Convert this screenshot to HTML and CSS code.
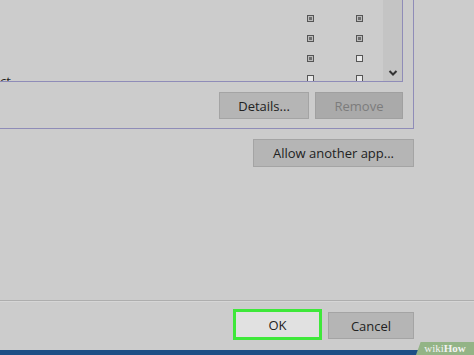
FILE: index.html
```html
<!DOCTYPE html>
<html lang="en">
<head>
    <meta charset="UTF-8">
    <title>Allowed apps</title>
    <link rel="stylesheet" href="styles.css">
</head>
<body>
    <div class="dialog">
        <div class="group">
            <div class="list">
                <div class="rows">
                    <div class="row">
                        <span class="name"></span>
                        <span class="cell"><i class="box on"></i></span>
                        <span class="cell"><i class="box on"></i></span>
                    </div>
                    <div class="row">
                        <span class="name"></span>
                        <span class="cell"><i class="box on"></i></span>
                        <span class="cell"><i class="box on"></i></span>
                    </div>
                    <div class="row">
                        <span class="name"></span>
                        <span class="cell"><i class="box on"></i></span>
                        <span class="cell"><i class="box"></i></span>
                    </div>
                    <div class="row">
                        <span class="name">ct</span>
                        <span class="cell"><i class="box"></i></span>
                        <span class="cell"><i class="box"></i></span>
                    </div>
                </div>
                <div class="scrollbar">
                    <svg width="10" height="8" viewBox="0 0 10 8">
                        <path d="M1.5 2 L5 5.5 L8.5 2" fill="none" stroke="#333" stroke-width="2"/>
                    </svg>
                </div>
            </div>
            <div class="group-buttons">
                <button class="btn details">Details...</button>
                <button class="btn remove" disabled>Remove</button>
            </div>
        </div>

        <div class="allow-row">
            <button class="btn allow">Allow another app...</button>
        </div>

        <div class="footer">
            <button class="btn ok">OK</button>
            <button class="btn cancel">Cancel</button>
        </div>
    </div>

    <div class="taskbar">
        <span class="wikihow">wiki<b>How</b></span>
    </div>
</body>
</html>
```

FILE: styles.css
```css
body {
    margin: 0;
    width: 474px;
    height: 355px;
    overflow: hidden;
    background: #cccccc;
    font-family: 'Open Sans', sans-serif;
    color: #222;
    display: flex;
    flex-direction: column;
}

.dialog {
    flex: 1;
    display: flex;
    flex-direction: column;
}

.group {
    width: 413px;
    height: 128px;
    border-right: 1px solid #8f8cb8;
    border-bottom: 1px solid #8f8cb8;
    display: flex;
    flex-direction: column;
}

.list {
    width: 402px;
    height: 81px;
    border-right: 1px solid #8f8cb8;
    border-bottom: 1px solid #8f8cb8;
    display: flex;
    overflow: hidden;
}

.rows {
    flex: 1;
    padding-top: 8px;
}

.row {
    height: 20px;
    display: flex;
    align-items: center;
    font-size: 13px;
}

.name {
    width: 300px;
    line-height: 20px;
    padding-top: 6px;
}

.cell {
    width: 20px;
    display: flex;
    justify-content: center;
}

.cell + .cell {
    margin-left: 29px;
}

.box {
    display: block;
    width: 5px;
    height: 5px;
    border: 1px solid #555;
    background: #e8e8e8;
}

.box.on {
    background: #6e6e6e;
    box-shadow: inset 0 0 0 1px #bbb;
}

.scrollbar {
    width: 19px;
    background: #c4c4c4;
    display: flex;
    align-items: flex-end;
    justify-content: center;
    padding-bottom: 4px;
}

.group-buttons {
    display: flex;
    justify-content: flex-end;
    gap: 6px;
    padding: 10px 10px 0 0;
}

.btn {
    font-family: 'Open Sans', sans-serif;
    font-size: 13px;
    color: #222;
    background: #b5b5b5;
    border: 1px solid #a4a4a4;
    padding: 0;
    height: 27px;
}

.details {
    width: 90px;
}

.remove {
    width: 88px;
    background: #aaaaaa;
    border-color: #a0a0a0;
    color: #7c7c7c;
}

.allow-row {
    display: flex;
    padding: 10px 0 0 253px;
}

.allow {
    width: 161px;
    height: 28px;
}

.footer {
    box-sizing: border-box;
    margin-top: auto;
    height: 50px;
    border-top: 1px solid #aeaeae;
    box-shadow: inset 0 1px 0 #d6d6d6;
    display: flex;
    align-items: flex-start;
    gap: 6px;
    padding: 8px 0 0 233px;
}

.ok {
    width: 89px;
    height: 31px;
    background: #e1e1e1;
    border: 3px solid #3ee83a;
}

.cancel {
    width: 86px;
    height: 27px;
    margin-top: 3px;
}

.taskbar {
    height: 5px;
    background: #1d4f86;
    position: relative;
}

.wikihow {
    position: absolute;
    right: 0;
    bottom: 0;
    width: 58px;
    height: 13px;
    background: #93b486;
    color: #f2f2f2;
    font-family: 'Liberation Serif', serif;
    font-size: 11px;
    line-height: 13px;
    text-align: center;
    clip-path: polygon(8% 0, 100% 0, 100% 100%, 0 100%);
}
```
